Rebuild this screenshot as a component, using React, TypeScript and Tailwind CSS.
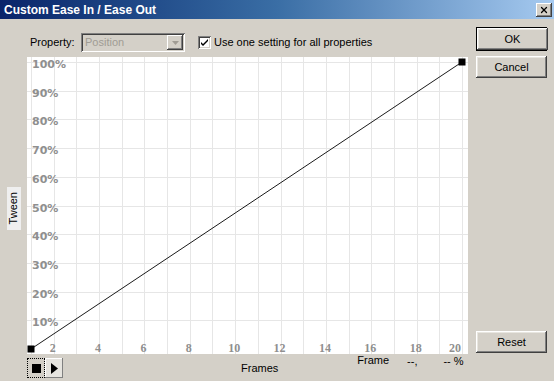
import { X } from 'lucide-react'

const frames = Array.from({ length: 20 }, (_, i) => i + 1)
const percents = [10, 20, 30, 40, 50, 60, 70, 80, 90, 100]

// chart coordinates, relative to the white plot box
const fx = (f: number) => 4 + (f - 1) * (431 / 19)
const py = (p: number) => 292 - p * 2.87

const winBtn =
  'h-[22px] w-[71px] bg-[#d4d0c8] text-[11px] text-black flex items-center justify-center shadow-[inset_-1px_-1px_#404040,inset_1px_1px_#ffffff,inset_-2px_-2px_#808080,inset_2px_2px_#e8e6e0]'

function EaseChart() {
  return (
    <svg width={441} height={297} className="block">
      {frames.map((f) => (
        <line key={f} x1={Math.round(fx(f)) + 0.5} x2={Math.round(fx(f)) + 0.5} y1={0} y2={297} stroke="#e6e6e6" strokeWidth={1} />
      ))}
      {percents.map((p) => (
        <line key={p} x1={0} x2={441} y1={Math.round(py(p)) + 0.5} y2={Math.round(py(p)) + 0.5} stroke="#e6e6e6" strokeWidth={1} />
      ))}
      {percents.map((p) => (
        <text
          key={p}
          x={5}
          y={py(p) + 6}
          fontFamily="'DejaVu Sans', sans-serif"
          fontWeight="bold"
          fontSize={11}
          fill="#8f8f8f"
        >
          {p}%
        </text>
      ))}
      {frames
        .filter((f) => f % 2 === 0)
        .map((f) => (
          <text
            key={f}
            x={f === 20 ? 434 : fx(f) - 1}
            y={295}
            textAnchor={f === 20 ? 'end' : 'middle'}
            fontFamily="'Liberation Serif', serif"
            fontWeight="bold"
            fontSize={12}
            fill="#8f8f8f"
          >
            {f}
          </text>
        ))}
      <line x1={fx(1)} y1={py(0)} x2={fx(20)} y2={py(100)} stroke="#000" strokeWidth={0.9} />
      <rect x={fx(1) - 3.5} y={py(0) - 3.5} width={7} height={7} fill="#000" />
      <rect x={fx(20) - 3.5} y={py(100) - 3.5} width={7} height={7} fill="#000" />
    </svg>
  )
}

export default function App() {
  return (
    <div className="w-[554px] h-[381px] bg-[#d4d0c8] flex flex-col overflow-hidden font-['Liberation_Sans',Arial,sans-serif] text-[11px] text-black">
      {/* Title bar */}
      <div className="h-[19px] flex items-center justify-between pl-[4px] pr-[2px] bg-gradient-to-r from-[#0a246a] via-[#3a6ea5] to-[#a6caf0]">
        <span className="text-white font-bold text-[12px] leading-none">Custom Ease In / Ease Out</span>
        <button className="w-[16px] h-[14px] bg-[#d4d0c8] flex items-center justify-center shadow-[inset_-1px_-1px_#404040,inset_1px_1px_#ffffff,inset_-2px_-2px_#808080]">
          <X size={10} strokeWidth={3} color="#000" />
        </button>
      </div>

      <div className="flex flex-1">
        {/* Left: settings + chart */}
        <div className="w-[476px] flex flex-col">
          <div className="h-[19px] mt-[14px] flex items-center">
            <span className="ml-[30px] w-[51px]">Property:</span>
            <div className="w-[104px] h-[19px] flex items-center bg-[#d4d0c8] shadow-[inset_1px_1px_#808080,inset_-1px_-1px_#ffffff,inset_2px_2px_#404040,inset_-2px_-2px_#d4d0c8]">
              <span className="flex-1 pl-[4px] text-[#a09c94]">Position</span>
              <div className="w-[16px] h-[15px] mr-[2px] flex items-center justify-center bg-[#d4d0c8] shadow-[inset_-1px_-1px_#404040,inset_1px_1px_#ffffff,inset_-2px_-2px_#808080]">
                <svg width="7" height="4" viewBox="0 0 7 4">
                  <path d="M0 0h7L3.5 4z" fill="#a09c94" />
                </svg>
              </div>
            </div>
            <div className="ml-[13px] w-[13px] h-[13px] bg-white flex items-center justify-center shadow-[inset_1px_1px_#808080,inset_-1px_-1px_#ffffff,inset_2px_2px_#404040,inset_-2px_-2px_#d4d0c8]">
              <svg width="7" height="7" viewBox="0 0 7 7">
                <path d="M0 3l2 2 5-5v2L2 7 0 5z" fill="#000" />
              </svg>
            </div>
            <span className="ml-[3px]">Use one setting for all properties</span>
          </div>

          <div className="flex mt-[5px]">
            <div className="w-[27px] flex items-center justify-center">
              <div className="w-[14px] h-[43px] mt-[6px] bg-[#efefef] flex items-center justify-center">
                <span className="[writing-mode:vertical-rl] rotate-180 leading-none">Tween</span>
              </div>
            </div>
            <div className="w-[441px] h-[297px] bg-white">
              <EaseChart />
            </div>
          </div>

          <div className="h-[24px] flex items-start">
            <div className="ml-[27px] mt-[4px] flex">
              <div className="w-[18px] h-[20px] border border-dotted border-black bg-[#d4d0c8] flex items-center justify-center">
                <div className="w-[9px] h-[9px] bg-black" />
              </div>
              <div className="w-[18px] h-[20px] bg-[#e6e4df] flex items-center justify-center shadow-[inset_-1px_-1px_#808080,inset_1px_1px_#ffffff]">
                <svg width="7" height="11" viewBox="0 0 7 11">
                  <path d="M0 0l7 5.5L0 11z" fill="#000" />
                </svg>
              </div>
            </div>
            <span className="ml-[178px] mt-[8px] leading-[13px]">Frames</span>
            <span className="ml-[79px] mt-[0px] leading-[13px]">Frame</span>
            <span className="ml-[18px] mt-[1px] leading-[13px]">--,</span>
            <span className="ml-[26px] mt-[1px] leading-[13px]">-- %</span>
          </div>
        </div>

        {/* Right: buttons */}
        <div className="w-[71px] flex flex-col">
          <div className="mt-[8px] border border-black">
            <button className={`${winBtn} w-[69px] h-[20px]`}>OK</button>
          </div>
          <button className={`${winBtn} mt-[5px]`}>Cancel</button>
          <div className="flex-1" />
          <button className={`${winBtn} mb-[28px]`}>Reset</button>
        </div>
      </div>
    </div>
  )
}
